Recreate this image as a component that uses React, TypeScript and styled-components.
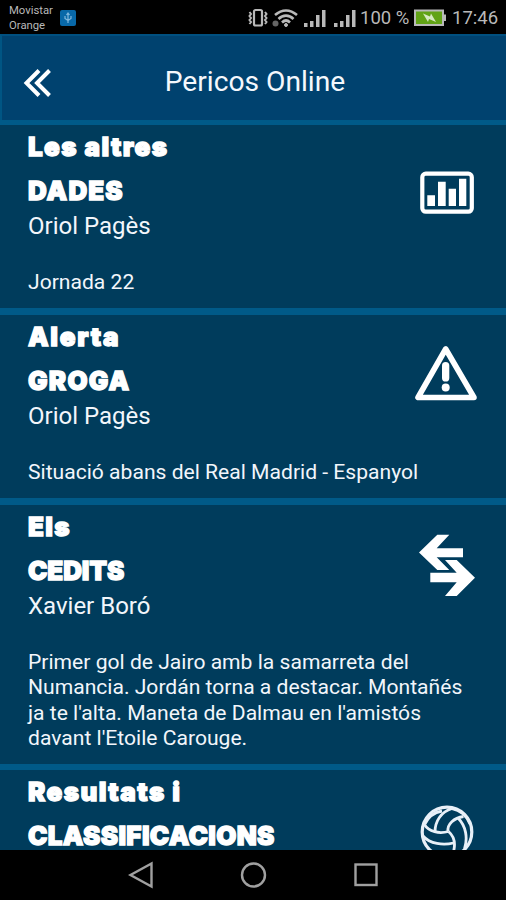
import React from "react";
import styled, { createGlobalStyle } from "styled-components";

const GlobalStyle = createGlobalStyle`
  * { box-sizing: border-box; }
  body { margin: 0; background: #000; overflow: hidden; }
`;

const Phone = styled.div`
  display: flex;
  flex-direction: column;
  width: 506px;
  height: 900px;
  overflow: hidden;
  background: #000;
  color: #f2f6fb;
  font-family: Roboto, sans-serif;
`;

const StatusBar = styled.div`
  display: flex;
  align-items: center;
  justify-content: space-between;
  flex: none;
  height: 34px;
  padding: 2px 8px 0 9px;
  background: #000;
  color: #b9b9b9;
`;

const Carriers = styled.div`
  display: flex;
  align-items: center;
  gap: 6px;
`;

const CarrierNames = styled.div`
  width: 45px;
  font-size: 11.3px;
  line-height: 15px;
  white-space: pre;
`;

const StatusIcons = styled.div`
  display: flex;
  align-items: center;
`;

const Signals = styled.div`
  display: flex;
  gap: 8px;
  margin-right: 4px;
`;

const StatusText = styled.span<{ $width: number }>`
  width: ${(p) => p.$width}px;
  font-size: 18.5px;
  line-height: 22px;
  white-space: nowrap;
`;

const Header = styled.header`
  display: flex;
  align-items: center;
  flex: none;
  height: 86px;
  padding: 8px 22px 0 21px;
  background: #00426f;
  border-top: 2px solid #005080;
  border-left: 2px solid #005583;
`;

const Title = styled.h1`
  flex: 1;
  margin: 0 26px 0 0;
  text-align: center;
  font-size: 28.2px;
  font-weight: 400;
  line-height: 34px;
  color: #f4f8fd;
`;

const List = styled.main`
  flex: 1;
  min-height: 0;
  overflow: hidden;
  background: #003c5c;
`;

const Card = styled.article<{ $height: number; $border: number }>`
  display: flex;
  height: ${(p) => p.$height}px;
  padding: 0 26px 0 28px;
  border-top: ${(p) => p.$border}px solid #005a88;
  background: #003c5c;
`;

const CardText = styled.div`
  width: 440px;
  flex: none;
  white-space: nowrap;
`;

const Heading = styled.h2<{ $spacing: number }>`
  margin: 0;
  font-family: Inter, sans-serif;
  font-size: 26px;
  font-weight: 900;
  line-height: 43.5px;
  letter-spacing: ${(p) => p.$spacing}px;
  color: #fff;
  -webkit-text-stroke: 1.3px #fff;
`;

const Author = styled.p`
  margin: 0;
  font-size: 24px;
  line-height: 28px;
`;

const Description = styled.p`
  margin: 29px 0 0;
  font-size: 21.1px;
  line-height: 25.3px;
  white-space: pre;
`;

const CardIcon = styled.div`
  flex: none;
  width: 64px;
  margin-left: -54px;
  padding-top: 31px;
  svg { display: block; overflow: visible; }
`;

const NavBar = styled.nav`
  display: flex;
  flex: none;
  height: 50px;
  align-items: center;
  justify-content: center;
  gap: 84px;
  background: #000;
`;

const ChartIcon = () => (
  <svg width="64" height="64" viewBox="0 0 64 64" fill="#fff">
    <rect x="8.3" y="17.7" width="49.5" height="38" rx="3.5" fill="none" stroke="#fff" strokeWidth="4.2" />
    <path d="M13.3 39.3H21V50h-7.700zM24 25.700h7.700V50H24zM34.700 32.700H42V50h-7.300zM45 22.700h7.300V50H45z" />
  </svg>
);

const WarningIcon = () => (
  <svg width="64" height="64" viewBox="0 0 64 64" fill="#fff">
    <path d="M31.700 3 4 51.500H60z" fill="none" stroke="#fff" strokeWidth="5.600" strokeLinejoin="round" />
    <rect x="28" y="16" width="7.300" height="19.500" rx="3.600" />
    <circle cx="31.700" cy="41.500" r="4" />
  </svg>
);

const TransferIcon = () => (
  <svg width="64" height="64" viewBox="0 0 64 64" fill="#fff">
    <path d="M5 16.500 23.300 -1.300H35.300L22.700 12.300H49V21.300H22.700L35.300 34H23.300z" />
    <path d="M61 41.700 42.700 60H31L42.700 46.300H16.300V36.700H42.700L31 24H42.700z" />
  </svg>
);

const BallIcon = () => (
  <svg width="64" height="64" viewBox="0 0 64 64" fill="none" stroke="#e8f0f8" strokeWidth="2.800">
    <circle cx="33" cy="31" r="24.800" strokeWidth="3.200" />
    <path d="M10 23C15 31 25 33 34.500 30.500M9 35C16 43 29 44.500 39.500 42" />
    <path d="M21 31C21 20 27 11 38 7.500M34 30.500C33 23 40 17 49.500 15.500" />
    <path d="M34.500 30.500C41 36 42 44 38.500 54M44 17C52 25 54 37 50.500 48" />
    <path d="M11 23C14 16 20 11.500 28 10M38 7.500C46 9 53 15 56 23" />
  </svg>
);

const items = [
  { top: "Les altres", topGap: 1.4, bottom: "DADES", bottomGap: 1.1, author: "Oriol Pagès", text: "Jornada 22", height: 188, border: 5, Icon: ChartIcon },
  { top: "Alerta", topGap: 1.7, bottom: "GROGA", bottomGap: 1.2, author: "Oriol Pagès", text: "Situació abans del Real Madrid - Espanyol", height: 190, border: 7, Icon: WarningIcon },
  { top: "Els", topGap: 1.3, bottom: "CEDITS", bottomGap: -0.1, author: "Xavier Boró", text: "Primer gol de Jairo amb la samarreta del\nNumancia. Jordán torna a destacar. Montañés\nja te l'alta. Maneta de Dalmau en l'amistós\ndavant l'Etoile Carouge.", height: 266, border: 7, Icon: TransferIcon },
  { top: "Resultats i", topGap: 1.45, bottom: "CLASSIFICACIONS", bottomGap: 0.35, author: "", text: "", height: 190, border: 6, Icon: BallIcon },
];

const Signal = () => (
  <svg width="22" height="20" viewBox="0 0 22 20" fill="#b9b9b9">
    <path d="M0 15h3.500v4H0zM6 13h3.500v6H6zM12 7h3.500v12H12zM18 2h3.500v17H18z" />
  </svg>
);

export default function App() {
  return (
    <Phone>
      <GlobalStyle />
      <StatusBar>
        <Carriers>
          <CarrierNames>{"Movistar\nOrange"}</CarrierNames>
          <svg width="16" height="16" viewBox="0 0 16 16" fill="none">
            <rect width="16" height="16" rx="2" fill="#0868a8" />
            <path d="M8 13V3.500M6.500 5 8 3l1.500 2M5 6v2.500l3 2 3-2V6" stroke="#7fb7dd" strokeWidth="1.200" />
          </svg>
        </Carriers>
        <StatusIcons>
          <svg width="56" height="20" viewBox="0 0 56 20" fill="none" stroke="#b9b9b9">
            <rect x="6" y="2" width="8" height="15.500" rx="1.500" strokeWidth="2.200" />
            <path d="M1.500 4l1.500 2-1.500 2 1.500 2-1.500 2 1.500 2-1.500 2M17 4l1.500 2-1.500 2 1.500 2-1.500 2 1.500 2-1.500 2" strokeWidth="2" />
            <path d="M27 7c7-6 15-6 22 0M30.500 11c4.500-4.500 10.500-4.500 15 0M34 14.500c2.500-2.500 5.500-2.500 8 0" strokeWidth="2.600" />
            <circle cx="38" cy="17" r="1.500" fill="#b9b9b9" />
            <circle cx="27.500" cy="15.500" r="3" fill="#666" stroke="none" />
          </svg>
          <Signals>
            <Signal />
            <Signal />
          </Signals>
          <StatusText $width={54}>100 %</StatusText>
          <svg width="38" height="18" viewBox="0 0 38 18">
            <rect x="1" y="1.500" width="28" height="14.500" fill="#61a316" stroke="#b9b9b9" strokeWidth="2" />
            <path d="M30 5.500h2v6.500h-2z" fill="#b9b9b9" />
            <path d="M9 4.500l7 3 1-3 5 8.500-7-3-1 3z" fill="#d6e8c2" />
          </svg>
          <StatusText $width={46}>17:46</StatusText>
        </StatusIcons>
      </StatusBar>
      <Header>
        <svg width="29" height="30" viewBox="0 0 29 30" fill="none" stroke="#fff" strokeWidth="4">
          <path d="M16 3.500 3.500 16 16 28.500M26.500 3.500 14 16l12.500 12.500" />
        </svg>
        <Title>Pericos Online</Title>
      </Header>
      <List>
        {items.map(({ Icon, ...item }) => (
          <Card key={item.bottom} $height={item.height} $border={item.border}>
            <CardText>
              <Heading $spacing={item.topGap}>{item.top}</Heading>
              <Heading $spacing={item.bottomGap}>{item.bottom}</Heading>
              <Author>{item.author}</Author>
              <Description>{item.text}</Description>
            </CardText>
            <CardIcon><Icon /></CardIcon>
          </Card>
        ))}
      </List>
      <NavBar>
        <svg width="28" height="28" viewBox="0 0 28 28" fill="none" stroke="#a0a0a0" strokeWidth="2.400">
          <path d="M24.500 2.500v23L3.500 14z" />
        </svg>
        <svg width="28" height="28" viewBox="0 0 28 28" fill="none" stroke="#a0a0a0" strokeWidth="2.400">
          <circle cx="14.500" cy="14" r="11.500" />
        </svg>
        <svg width="28" height="28" viewBox="0 0 28 28" fill="none" stroke="#a0a0a0" strokeWidth="2.400">
          <rect x="4.500" y="3.500" width="21" height="20.500" />
        </svg>
      </NavBar>
    </Phone>
  );
}
